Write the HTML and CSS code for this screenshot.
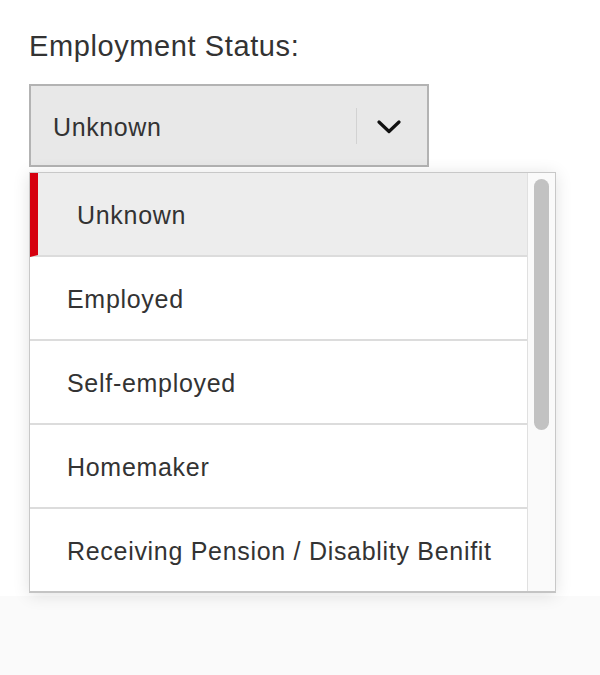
FILE: index.html
```html
<!DOCTYPE html>
<html lang="en">
<head>
<meta charset="utf-8">
<title>Employment Status</title>
<link rel="stylesheet" href="styles.css">
</head>
<body>
<main class="page">
  <section class="field">
    <label class="field-label">Employment Status:</label>
    <div class="select">
      <span class="select-value">Unknown</span>
      <span class="select-divider"></span>
      <span class="select-arrow">
        <svg width="24" height="14" viewBox="0 0 24 14"><path d="M2 2 L12 11.5 L22 2" fill="none" stroke="#111" stroke-width="3.2" stroke-linecap="round" stroke-linejoin="round"/></svg>
      </span>
    </div>
    <div class="listbox">
      <ul class="options">
        <li class="option selected">Unknown</li>
        <li class="option">Employed</li>
        <li class="option">Self-employed</li>
        <li class="option">Homemaker</li>
        <li class="option">Receiving Pension / Disablity Benifit</li>
      </ul>
      <div class="scrollbar"><div class="thumb"></div></div>
    </div>
  </section>
  <div class="footer"></div>
</main>
</body>
</html>
```

FILE: styles.css
```css
html, body {
  margin: 0;
  padding: 0;
  background: #ffffff;
}
.page {
  width: 600px;
  height: 675px;
  display: flex;
  flex-direction: column;
  font-family: "Liberation Sans", Arial, sans-serif;
  color: #333333;
}
.field {
  padding: 29px 0 0 29px;
  height: 596px;
  box-sizing: border-box;
}
.field-label {
  display: block;
  font-size: 29px;
  line-height: 34px;
  letter-spacing: 0.6px;
  color: #333;
}
.select {
  margin-top: 21px;
  width: 400px;
  height: 83px;
  box-sizing: border-box;
  border: 2px solid #b3b3b3;
  background: #e8e8e8;
  display: flex;
  align-items: center;
}
.select-value {
  flex: 1;
  padding: 3px 0 0 22px;
  font-size: 25px;
  letter-spacing: 0.6px;
  color: #333;
}
.select-divider {
  width: 1px;
  height: 36px;
  background: #d2d2d2;
}
.select-arrow {
  width: 64px;
  display: flex;
  justify-content: center;
  padding: 2px 6px 0 0;
}
.select-arrow svg { display: block; }
.listbox {
  margin-top: 5px;
  width: 527px;
  height: 421px;
  box-sizing: border-box;
  border: 1px solid #c8c8c8;
  border-bottom: 2px solid #c4c4c4;
  background: #fff;
  box-shadow: 0 2px 16px rgba(0,0,0,0.12);
  display: flex;
  position: relative;
}
.options {
  list-style: none;
  margin: 0;
  padding: 0;
  width: 497px;
}
.option {
  height: 84px;
  box-sizing: border-box;
  border-bottom: 2px solid #dcdcdc;
  display: flex;
  align-items: center;
  padding: 3px 0 0 37px;
  font-size: 25px;
  letter-spacing: 0.7px;
  color: #333;
}
.option:last-child { border-bottom: none; height: 82px; }
.option.selected {
  background: #ededed;
  border-left: 8px solid #d6000f;
  padding-left: 39px;
}
.scrollbar {
  flex: 1;
  border-left: 1px solid #e0e0e0;
  background: #fafafa;
  padding: 6px 5px 0 6px;
}
.thumb {
  width: 15px;
  height: 251px;
  border-radius: 8px;
  background: #c2c2c2;
}
.footer {
  flex: 1;
  background: #fafafa;
}
```
